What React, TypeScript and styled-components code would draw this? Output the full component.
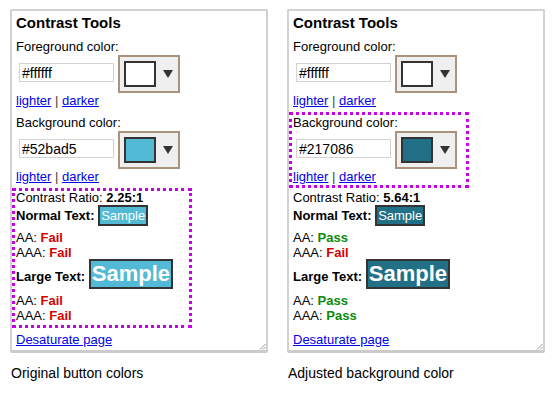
import React from "react";
import styled, { createGlobalStyle } from "styled-components";

const Global = createGlobalStyle`
  html, body { margin: 0; padding: 0; background: #ffffff; }
  body { font-family: "Liberation Sans", Arial, Helvetica, sans-serif; color: #000; }
`;

const Page = styled.div`
  display: flex;
  gap: 19px;
  padding: 9px 0 0 10px;
`;

const Column = styled.div`
  width: 258px;
  display: flex;
  flex-direction: column;
`;

const Panel = styled.div`
  position: relative;
  box-sizing: border-box;
  height: 344px;
  border: 2px solid #d2d2d2;
  border-bottom: 3px solid #cbcbcb;
  border-radius: 2px;
  padding: 3px 0 3px 0;
  font-size: 13px;
  line-height: 15px;
`;

const Grip = styled.svg`
  position: absolute;
  right: 0;
  bottom: 0;
`;

const Title = styled.h1`
  margin: 0 0 5px 0;
  padding-left: 4px;
  font-size: 15px;
  line-height: 17px;
  font-weight: bold;
`;

const Section = styled.div<{ $hl?: boolean }>`
  box-sizing: border-box;
  width: 180px;
  padding: 3px 0 4px 4px;
  outline: ${(p) => (p.$hl ? "3px dotted #c800e8" : "none")};
  outline-offset: -3px;
`;

const Label = styled.div`
  line-height: 15px;
`;

const ColorRow = styled.div`
  display: flex;
  align-items: center;
  gap: 4px;
  margin-top: 1px;
  height: 38px;
`;

const HexInput = styled.input`
  box-sizing: border-box;
  width: 95px;
  height: 19px;
  margin: 0 0 3px 3px;
  padding: 0 2px;
  border: 1px solid #d3d3d3;
  font-family: "Liberation Sans", Arial, sans-serif;
  font-size: 14px;
  color: #000;
  background: #fff;
  outline: none;
`;

const PickerButton = styled.div`
  box-sizing: border-box;
  width: 62px;
  height: 38px;
  display: flex;
  align-items: center;
  gap: 7px;
  padding: 0 0 0 4px;
  border: 2px solid #ab927c;
  background: #efefef;
`;

const Swatch = styled.div<{ $color: string }>`
  box-sizing: border-box;
  width: 32px;
  height: 26px;
  border: 2px solid #333;
  background: ${(p) => p.$color};
`;

const Links = styled.div`
  line-height: 15px;
`;

const Link = styled.a`
  color: #0000ee;
  text-decoration: underline;
  cursor: pointer;
`;

const Sep = styled.span`
  color: #444;
`;

const RatioLine = styled.div`
  line-height: 14px;
`;

const SampleRow = styled.div<{ $shift?: number }>`
  line-height: 15px;
  margin-top: ${(p) => p.$shift ?? 0}px;
`;

const Bold = styled.b`
  font-weight: bold;
`;

const Sample = styled.span<{ $bg: string; $large?: boolean }>`
  display: inline-block;
  padding: 1px;
  border: 2px solid #333;
  background: ${(p) => p.$bg};
  color: #fff;
  font-size: ${(p) => (p.$large ? "22px" : "13px")};
  line-height: ${(p) => (p.$large ? "24px" : "15px")};
  font-weight: ${(p) => (p.$large ? "bold" : "normal")};
`;

const Verdicts = styled.div`
  margin-top: 4px;
  line-height: 15px;
`;

const Verdict = styled.b<{ $pass: boolean }>`
  font-weight: bold;
  color: ${(p) => (p.$pass ? "#0b8a0b" : "#d40000")};
`;

const Results = styled(Section)`
  padding-bottom: 5px;
`;

const Footer = styled.div`
  margin-top: 4px;
  padding-left: 4px;
  line-height: 15px;
`;

const Caption = styled.div`
  margin: 12px 0 0 1px;
  font-size: 14px;
  line-height: 16px;
`;

const Arrow = () => (
  <svg width="10" height="8" viewBox="0 0 10 8">
    <path d="M0 0 H10 L5 8 Z" fill="#333" />
  </svg>
);

type ColorFieldProps = { label: string; value: string; hl?: boolean };

const ColorField = ({ label, value, hl }: ColorFieldProps) => (
  <Section $hl={hl}>
    <Label>{label}</Label>
    <ColorRow>
      <HexInput defaultValue={value} />
      <PickerButton>
        <Swatch $color={value} />
        <Arrow />
      </PickerButton>
    </ColorRow>
    <Links>
      <Link>lighter</Link> <Sep>|</Sep> <Link>darker</Link>
    </Links>
  </Section>
);

type Tool = {
  caption: string;
  bg: string;
  ratio: string;
  normal: [boolean, boolean];
  large: [boolean, boolean];
  hl: "bg" | "results";
};

const tools: Tool[] = [
  {
    caption: "Original button colors",
    bg: "#52bad5",
    ratio: "2.25:1",
    normal: [false, false],
    large: [false, false],
    hl: "results",
  },
  {
    caption: "Adjusted background color",
    bg: "#217086",
    ratio: "5.64:1",
    normal: [true, false],
    large: [true, true],
    hl: "bg",
  },
];

const Pair = ({ res }: { res: [boolean, boolean] }) => (
  <Verdicts>
    <div>
      AA: <Verdict $pass={res[0]}>{res[0] ? "Pass" : "Fail"}</Verdict>
    </div>
    <div>
      AAA: <Verdict $pass={res[1]}>{res[1] ? "Pass" : "Fail"}</Verdict>
    </div>
  </Verdicts>
);

const ContrastPanel = ({ t }: { t: Tool }) => (
  <Column>
    <Panel>
      <Title>Contrast Tools</Title>
      <ColorField label="Foreground color:" value="#ffffff" />
      <ColorField label="Background color:" value={t.bg} hl={t.hl === "bg"} />
      <Results $hl={t.hl === "results"}>
        <RatioLine>
          Contrast Ratio: <Bold>{t.ratio}</Bold>
        </RatioLine>
        <SampleRow>
          <Bold>Normal Text:</Bold> <Sample $bg={t.bg}>Sample</Sample>
        </SampleRow>
        <Pair res={t.normal} />
        <SampleRow $shift={-1}>
          <Bold>Large Text:</Bold> <Sample $bg={t.bg} $large>Sample</Sample>
        </SampleRow>
        <Pair res={t.large} />
      </Results>
      <Footer>
        <Link>Desaturate page</Link>
      </Footer>
      <Grip width="7" height="7" viewBox="0 0 7 7">
        <path d="M6.5 1 L1 6.5 M6.5 4 L4 6.5" stroke="#9a9a9a" strokeWidth="1" />
      </Grip>
    </Panel>
    <Caption>{t.caption}</Caption>
  </Column>
);

export default function App() {
  return (
    <>
      <Global />
      <Page>
        {tools.map((t) => (
          <ContrastPanel key={t.caption} t={t} />
        ))}
      </Page>
    </>
  );
}
